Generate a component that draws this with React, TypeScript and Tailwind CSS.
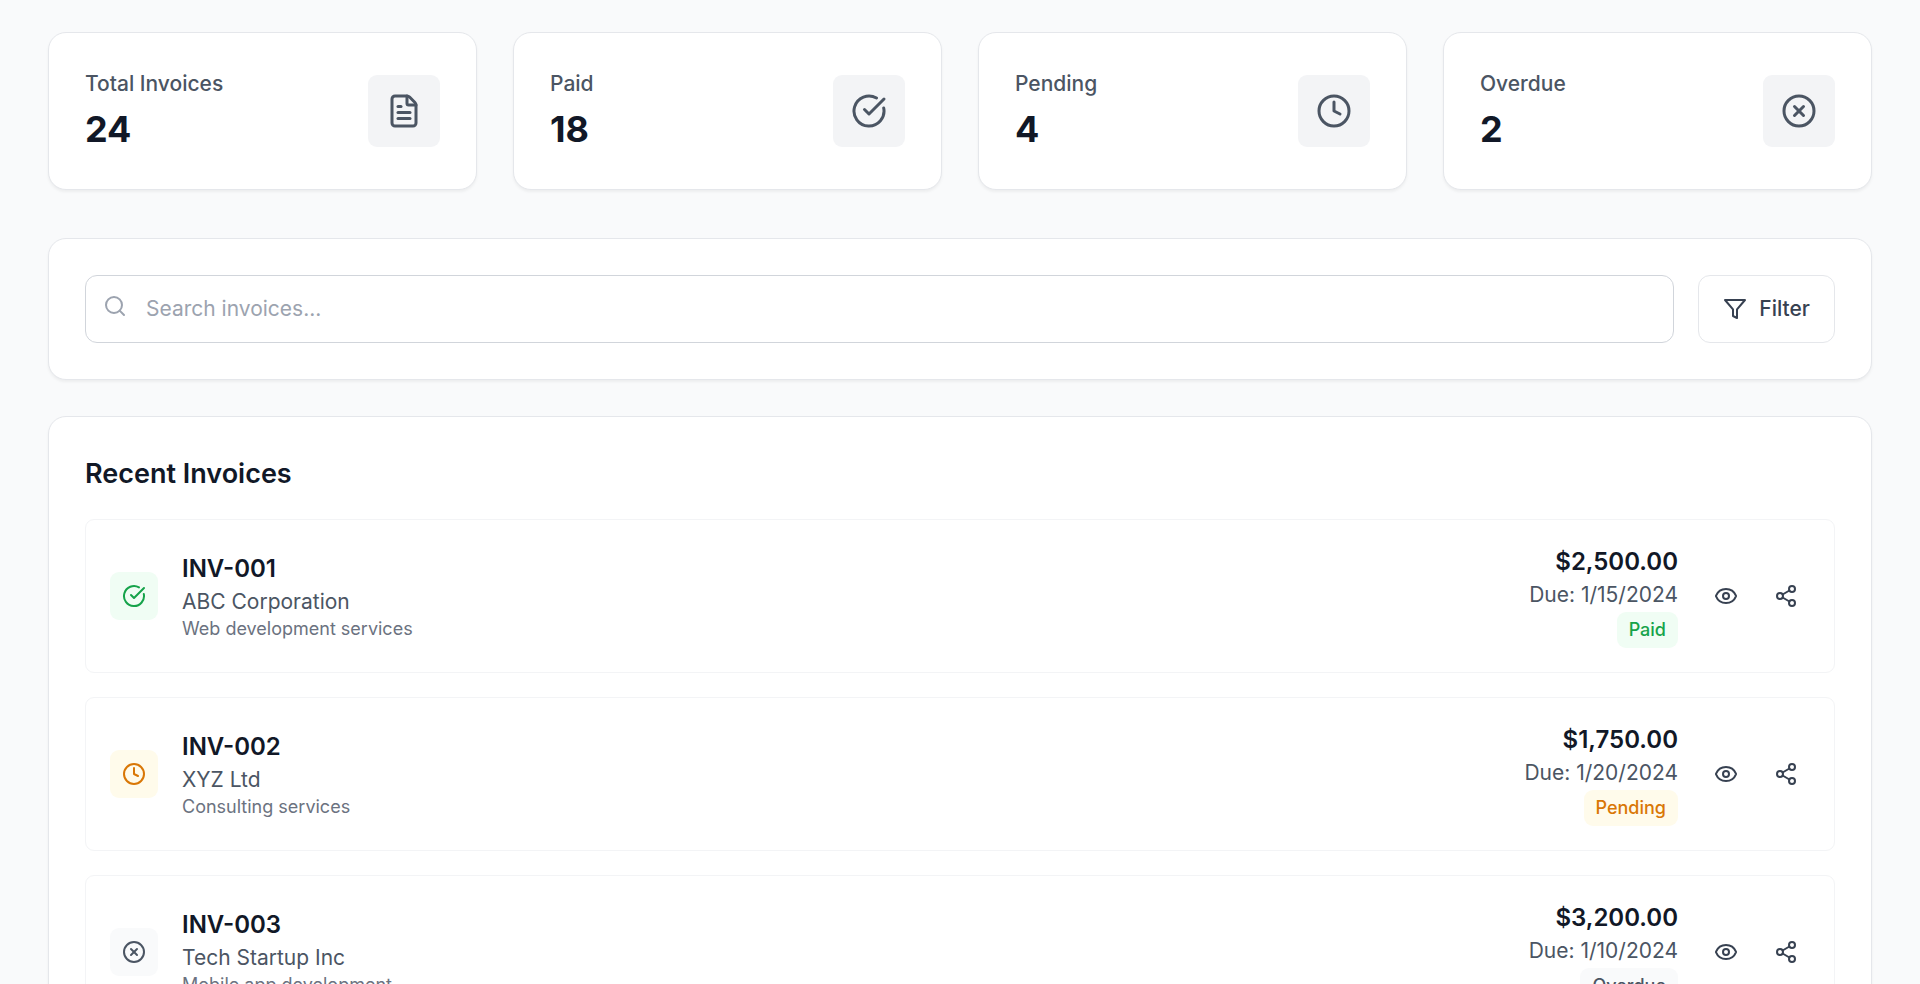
import React from 'react';
import { CircleCheckBig, CircleX, Clock, Eye, FileText, Search, Share2 } from 'lucide-react';
import type { LucideIcon } from 'lucide-react';

type Status = 'Paid' | 'Pending' | 'Overdue';

interface Stat {
  label: string;
  value: number;
  icon: LucideIcon;
}

interface Invoice {
  id: string;
  client: string;
  description: string;
  amount: string;
  due: string;
  status: Status;
}

const stats: Stat[] = [
  { label: 'Total Invoices', value: 24, icon: FileText },
  { label: 'Paid', value: 18, icon: CircleCheckBig },
  { label: 'Pending', value: 4, icon: Clock },
  { label: 'Overdue', value: 2, icon: CircleX },
];

const invoices: Invoice[] = [
  { id: 'INV-001', client: 'ABC Corporation', description: 'Web development services', amount: '$2,500.00', due: '1/15/2024', status: 'Paid' },
  { id: 'INV-002', client: 'XYZ Ltd', description: 'Consulting services', amount: '$1,750.00', due: '1/20/2024', status: 'Pending' },
  { id: 'INV-003', client: 'Tech Startup Inc', description: 'Mobile app development', amount: '$3,200.00', due: '1/10/2024', status: 'Overdue' },
];

const statusStyles: Record<Status, { tone: string; icon: LucideIcon }> = {
  Paid: { tone: 'bg-[#f0fdf4] text-[#16a34a]', icon: CircleCheckBig },
  Pending: { tone: 'bg-[#fffbeb] text-[#d97706]', icon: Clock },
  Overdue: { tone: 'bg-[#f9fafb] text-[#4b5563]', icon: CircleX },
};

const cardClass = 'rounded-[18px] border border-[#e5e7eb] bg-white p-9 shadow-[0_2px_3px_0_rgba(0,0,0,0.05)]';

function FilterIcon() {
  return (
    <svg className="size-6" viewBox="0 0 24 24" fill="none" stroke="currentColor" strokeWidth="2" strokeLinecap="round" strokeLinejoin="round" aria-hidden="true">
      <polygon points="22 3 2 3 10 12.46 10 19 14 21 14 12.46 22 3" />
    </svg>
  );
}

function StatCard({ label, value, icon: Icon }: Stat) {
  return (
    <div className={`${cardClass} flex items-center justify-between`}>
      <div>
        <p className="text-[21px] leading-[30px] font-medium text-[#4b5563]">{label}</p>
        <p className="mt-1.5 text-4xl leading-[48px] font-bold text-[#111827]">{value}</p>
      </div>
      <div className="rounded-[9px] bg-[#f3f4f6] p-[18px] text-[#4b5563]">
        <Icon className="size-9" />
      </div>
    </div>
  );
}

function InvoiceRow({ invoice }: { invoice: Invoice }) {
  const { tone, icon: Icon } = statusStyles[invoice.status];
  return (
    <li className="flex items-center justify-between rounded-[9px] border border-[#f3f4f6] p-6">
      <div className="flex items-center gap-6">
        <div className={`rounded-[9px] p-3 ${tone}`}>
          <Icon className="size-6" />
        </div>
        <div>
          <h3 className="text-2xl leading-9 font-semibold text-[#111827]">{invoice.id}</h3>
          <p className="text-[21px] leading-[30px] text-[#4b5563]">{invoice.client}</p>
          <p className="text-lg leading-6 text-[#6b7280]">{invoice.description}</p>
        </div>
      </div>
      <div className="flex items-center gap-6">
        <div className="flex flex-col items-end">
          <p className="text-2xl leading-9 font-semibold text-[#111827]">{invoice.amount}</p>
          <p className="text-[21px] leading-[30px] text-[#4b5563]">Due: {invoice.due}</p>
          <span className={`mt-0.5 rounded-[9px] px-3 py-1.5 text-lg leading-6 font-medium ${tone}`}>{invoice.status}</span>
        </div>
        <div className="flex gap-3 text-[#374151]">
          <button type="button" aria-label={`View ${invoice.id}`} className="rounded-[9px] p-3 hover:bg-gray-100">
            <Eye className="size-6" />
          </button>
          <button type="button" aria-label={`Share ${invoice.id}`} className="rounded-[9px] p-3 hover:bg-gray-100">
            <Share2 className="size-6" />
          </button>
        </div>
      </div>
    </li>
  );
}

export default function App() {
  return (
    <main className="min-h-screen bg-[#f9fafb] px-12 pt-8 pb-12 font-['Inter',sans-serif]">
      <section aria-label="Invoice totals" className="mb-12 grid grid-cols-1 gap-9 md:grid-cols-2 lg:grid-cols-4">
        {stats.map((stat) => (
          <StatCard key={stat.label} {...stat} />
        ))}
      </section>

      <section aria-label="Find invoices" className={`${cardClass} mb-9 flex gap-6`}>
        <div className="relative flex-1">
          <Search className="absolute top-[19px] left-[18px] size-6 text-[#9ca3af]" />
          <input
            type="text"
            aria-label="Search invoices"
            placeholder="Search invoices..."
            className="w-full rounded-xl border border-[#d1d5db] bg-white py-[18px] pr-6 pl-[60px] text-[21px] leading-[30px] text-[#111827] outline-none placeholder:text-[#9ca3af]"
          />
        </div>
        <button type="button" className="flex items-center gap-3 rounded-xl border border-[#e5e7eb] bg-white px-6 py-[18px] text-[21px] leading-[30px] font-medium text-[#374151] hover:bg-gray-50">
          <FilterIcon />
          Filter
        </button>
      </section>

      <section className={cardClass}>
        <h2 className="mb-6 text-[27px] leading-[42px] font-semibold text-[#111827]">Recent Invoices</h2>
        <ul className="flex flex-col gap-6">
          {invoices.map((invoice) => (
            <InvoiceRow key={invoice.id} invoice={invoice} />
          ))}
        </ul>
      </section>
    </main>
  );
}
